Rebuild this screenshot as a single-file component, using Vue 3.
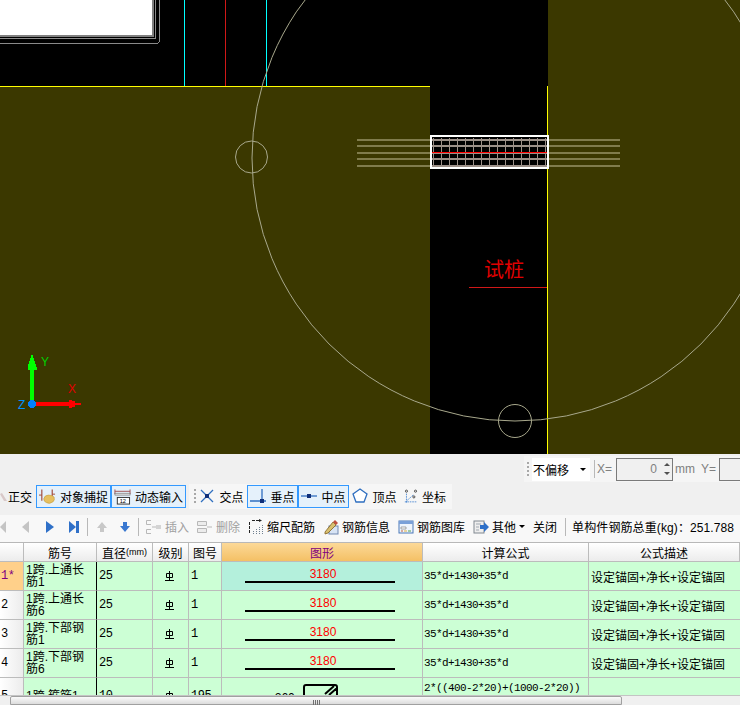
<template>
  <div class="page">
    <!-- CAD 画布 -->
    <svg class="canvas" width="740" height="454" viewBox="0 0 740 454" shape-rendering="crispEdges">
      <rect width="740" height="454" fill="#000" />
      <rect x="0" y="87" width="430" height="367" fill="#3b3800" />
      <rect x="548" y="0" width="192" height="454" fill="#3b3800" />
      <rect x="0" y="86" width="430" height="1" fill="#ffff00" />
      <rect x="547" y="86" width="1" height="368" fill="#ffff00" />
      <rect x="184" y="0" width="1" height="86" fill="#00ffff" />
      <rect x="225" y="0" width="1" height="86" fill="#d01818" />
      <rect x="266" y="0" width="1" height="86" fill="#00ffff" />

      <rect x="0" y="0" width="152" height="35" fill="#fff" />
      <path d="M0 36H153V0" fill="none" stroke="#808080" stroke-width="2" />
      <path d="M0 38.5H155.5V0" fill="none" stroke="#8a8a8a" />
      <path d="M0 43.5H156Q159.5 43.5 159.5 40V0" fill="none" stroke="#8a8a8a" />

      <g shape-rendering="auto" fill="none" stroke="#a8a88c" stroke-width="1">
        <circle cx="515" cy="158" r="263" />
        <circle cx="251.5" cy="157" r="16" />
        <circle cx="515" cy="421" r="16.5" />
      </g>

      <rect v-for="y in barYs" :key="'b' + y" x="357" :y="y" width="263" height="2" fill="#807c4c" />
      <rect x="430" y="136" width="118" height="33" fill="#000" />
      <rect v-for="y in barYs" :key="'g' + y" x="431" :y="y" width="116" height="2" fill="#9c9088" />
      <rect v-for="x in stirrupXs" :key="x" :x="x" y="138" width="1" height="30" fill="#9c9088" />
      <rect x="431" y="152" width="116" height="1" fill="#ff0000" />
      <rect x="431" y="136" width="117" height="32" fill="none" stroke="#fff" stroke-width="2" />

      <text x="484" y="277" class="pile-text">试桩</text>
      <rect x="469" y="287" width="78" height="1" fill="#d01818" />

      <!-- 坐标轴 -->
      <rect x="30" y="368" width="4" height="36" fill="#00ff00" />
      <path d="M31 355h2v3h1v3h1v3h1v3h0.500v3h-9v-3h0.500v-3h1v-3h1v-3h1z" fill="#00ff00" />
      <rect x="34" y="402" width="36" height="4" fill="#ff0000" />
      <path d="M69 400h3v1h3v2h6v2h-6v2h-3v1h-3z" fill="#ff0000" />
      <circle cx="32" cy="404" r="4" fill="#0080ff" />
      <text x="41" y="366" class="axis" fill="#00d000">Y</text>
      <text x="68" y="393" class="axis" fill="#e00000">X</text>
      <text x="18" y="409" class="axis" fill="#0090ff">Z</text>
    </svg>

    <div class="panel">
      <!-- 偏移工具条 -->
      <div class="offset-bar">
        <div class="offset-group">
          <span class="grip"></span>
          <div class="combo">不偏移<span class="combo-arrow"></span></div>
          <span class="vsep"></span>
          <span class="dim x-label">X=</span>
          <div class="spin">0<span class="spin-btns"><i class="up"></i><i class="down"></i></span></div>
          <span class="dim mm-label">mm</span>
          <span class="dim y-label">Y=</span>
          <div class="spin"></div>
        </div>
      </div>

      <!-- 捕捉工具条 -->
      <div class="snap-bar">
        <div class="snap-group left">
          <span class="snap-btn plain ortho">
            <svg width="8" height="14" viewBox="0 0 8 14"><path d="M0 5l2-1 5 8H4z" fill="#d8c8c8" /></svg>
            正交
          </span>
          <span class="snap-btn on wide">
            <svg width="18" height="17" viewBox="0 0 18 17"><path d="M3 1v12M14 1v7" stroke="#a04838" stroke-width="1.200" /><path d="M0 7h3M14 6h3" stroke="#a04838" /><path d="M5 11q1-4 5-4t6 2q1 3-1 5-4 3-7 1-3-1-3-4z" fill="#e6c060" stroke="#c09838" stroke-width="0.600" /></svg>
            对象捕捉
          </span>
          <span class="snap-btn on wide">
            <svg width="18" height="17" viewBox="0 0 18 17"><path d="M1 1v5M17 1v5M1 3h16" stroke="#a05050" fill="none" /><rect x="1" y="5" width="16" height="2" fill="#e8e8e8" stroke="#606060" stroke-width="0.600" /><rect x="3.500" y="9.500" width="13" height="7" fill="#fff" stroke="#303030" /><text x="6" y="15.500" font-size="6" font-family="Liberation Sans">12</text></svg>
            动态输入
          </span>
        </div>
        <div class="snap-group right">
          <span class="grip"></span>
          <span class="snap-btn plain">
            <svg width="16" height="16" viewBox="0 0 16 16"><path d="M2 2l12 12M14 2L2 14" stroke="#2f6fc0" stroke-width="1.300" /><rect x="6" y="6" width="4" height="4" fill="#10307a" /></svg>
            交点
          </span>
          <span class="snap-btn on">
            <svg width="16" height="16" viewBox="0 0 16 16"><path d="M0 13h16M12 1v13" stroke="#2f6fc0" stroke-width="1.300" /><rect x="10" y="11" width="4" height="4" fill="#10307a" /></svg>
            垂点
          </span>
          <span class="snap-btn on">
            <svg width="16" height="16" viewBox="0 0 16 16"><path d="M0 8h16" stroke="#2f6fc0" stroke-width="1.300" /><rect x="6" y="6" width="4" height="4" fill="#10307a" /></svg>
            中点
          </span>
          <span class="snap-btn plain">
            <svg width="16" height="16" viewBox="0 0 16 16"><path d="M8 1l7 5-3 8H4L1 6z" fill="#fff" stroke="#2f6fc0" stroke-width="1.300" /></svg>
            顶点
          </span>
          <span class="snap-btn plain coord">
            <svg width="17" height="17" viewBox="0 0 17 17"><path d="M3 16V4M1 15h14M3 14l9-8" stroke="#3f80d0" stroke-dasharray="2 1" fill="none" /><circle cx="3" cy="2" r="1.300" fill="none" stroke="#333" /><circle cx="14" cy="2" r="1.300" fill="none" stroke="#333" /><circle cx="12" cy="9" r="1.300" fill="none" stroke="#333" /></svg>
            坐标
          </span>
        </div>
      </div>

      <!-- 钢筋工具条 -->
      <div class="rebar-bar">
        <svg class="nav first" width="6" height="12" viewBox="0 0 6 12"><path d="M6 0v12L0 6z" fill="#c4c4c4" /></svg>
        <svg class="nav prev" width="7" height="12" viewBox="0 0 7 12"><path d="M7 0v12L0 6z" fill="#c4c4c4" /></svg>
        <svg class="nav play" width="8" height="12" viewBox="0 0 8 12"><path d="M0 0v12l8-6z" fill="#2f70c8" /></svg>
        <svg class="nav last" width="10" height="12" viewBox="0 0 10 12"><path d="M0 0v12l7-6z" fill="#2f70c8" /><rect x="7" y="0" width="3" height="12" fill="#2f70c8" /></svg>
        <span class="vsep tool"></span>
        <svg class="nav up" width="10" height="12" viewBox="0 0 10 12"><path d="M5 1l5 6H7v4H3V7H0z" fill="#c8c8c8" /></svg>
        <svg class="nav down" width="10" height="12" viewBox="0 0 10 12"><path d="M5 11l5-6H7V1H3v4H0z" fill="#3a78d0" /></svg>
        <span class="vsep tool"></span>
        <span class="tool-btn disabled insert">
          <svg width="17" height="16" viewBox="0 0 17 16"><path d="M6 1.500H1.500v4H6M6 10.500H1.500v4H6M7 8h5" fill="none" stroke="#b8b8b8" /><rect x="11" y="6" width="5" height="4" fill="#d4d4d4" /></svg>
          插入
        </span>
        <span class="tool-btn disabled">
          <svg width="17" height="16" viewBox="0 0 17 16"><path d="M1.500 2.500h9v4h-9zM1.500 9.500h9v4h-9zM11 8h5" fill="#ececec" stroke="#b8b8b8" /></svg>
          删除
        </span>
        <span class="tool-btn">
          <svg width="16" height="16" viewBox="0 0 16 16"><path d="M1.500 3v12M4 1.500h7" stroke="#222" stroke-dasharray="3 1" fill="none" /><path d="M11 0v3l3-1.500z" fill="#222" /><path d="M5.500 15v-3M8.500 15v-5M11.500 15v-7M14.500 15v-9" stroke="#708090" stroke-dasharray="1 1" /></svg>
          缩尺配筋
        </span>
        <span class="tool-btn">
          <svg width="16" height="16" viewBox="0 0 16 16"><rect x="6" y="7" width="9" height="8" fill="#d8e4f4" stroke="#7088b0" /><path d="M2 13L10 3l3 3-8 8-3 1z" fill="#d8c070" stroke="#806020" stroke-width="0.800" /><path d="M10 3l2-2 3 3-2 2z" fill="#c05040" /></svg>
          钢筋信息
        </span>
        <span class="tool-btn">
          <svg width="16" height="16" viewBox="0 0 16 16"><rect x="1" y="2" width="14" height="12" fill="#eef4fc" stroke="#4a78b8" /><rect x="1" y="2" width="14" height="3" fill="#7aa0d8" /><path d="M3 8h5v2H3z" fill="#fff" stroke="#707070" stroke-width="0.600" /><path d="M3 12h2" stroke="#c06040" /><path d="M6 12h3" stroke="#e0b040" /><path d="M10 12h3" stroke="#50a050" /></svg>
          钢筋图库
        </span>
        <span class="tool-btn">
          <svg width="16" height="16" viewBox="0 0 16 16"><rect x="1" y="2" width="10" height="12" fill="#eeeeee" stroke="#808890" /><path d="M3 5h5M3 8h3M3 11h3" stroke="#a0a8b0" /><path d="M7 6h4V3l5 5-5 5v-3H7z" fill="#2f70c8" /></svg>
          其他<span class="caret"></span>
        </span>
        <span class="tool-btn close">关闭</span>
        <span class="vsep tool"></span>
        <span class="total">单构件钢筋总重(kg)：251.788</span>
      </div>
    </div>

    <!-- 钢筋表 -->
    <div class="sheet">
      <div class="grid">
        <div class="cell head"></div>
        <div v-for="h in headers" :key="h.label" class="cell head" :class="{ active: h.label === '图形' }">
          {{ h.label }}<span v-if="h.unit" class="unit">{{ h.unit }}</span>
        </div>
        <template v-for="(row, i) in rows" :key="row.id">
          <div class="cell num" :class="{ current: i === 0, tall: !row.len }">{{ row.id }}{{ i === 0 ? '*' : '' }}</div>
          <div class="cell name">{{ row.name }}</div>
          <div class="cell">{{ row.dia }}</div>
          <div class="cell center">
            <svg width="9" height="10" viewBox="0 0 9 10"><path d="M1.500 2.500h6v4h-6zM4.500 0v9M0 9.500h9" fill="none" stroke="#000" /></svg>
          </div>
          <div class="cell">{{ row.fig }}</div>
          <div class="cell shape" :class="{ picked: i === 0 }">
            <template v-if="row.len">
              <span class="len">{{ row.len }}</span>
              <span class="bar"></span>
            </template>
            <div v-else class="stirrup">
              <span>260</span>
              <svg width="36" height="24" viewBox="0 0 36 24"><path d="M1 24V3q0-2 2-2h29q2 0 2 2v22M22 10l9-8M26 11l8-7" fill="none" stroke="#000" stroke-width="2" /></svg>
            </div>
          </div>
          <div class="cell formula" :class="{ top: !row.len }">{{ row.formula }}</div>
          <div class="cell desc">{{ row.desc }}</div>
        </template>
      </div>
    </div>

    <!-- 横向滚动条 -->
    <div class="hscroll">
      <span class="thumb"><i></i></span>
    </div>
  </div>
</template>

<script setup>
const barYs = [139, 145, 152, 158, 165]
const stirrupXs = Array.from({ length: 15 }, (_, i) => Math.round(433 + i * 8.02))

const headers = [
  { label: '筋号' },
  { label: '直径', unit: '(mm)' },
  { label: '级别' },
  { label: '图号' },
  { label: '图形' },
  { label: '计算公式' },
  { label: '公式描述' },
]

const desc = '设定锚固+净长+设定锚固'
const formula = '35*d+1430+35*d'
const rows = [
  { id: 1, name: '1跨.上通长筋1', dia: 25, fig: 1, len: 3180, formula, desc },
  { id: 2, name: '1跨.上通长筋6', dia: 25, fig: 1, len: 3180, formula, desc },
  { id: 3, name: '1跨.下部钢筋1', dia: 25, fig: 1, len: 3180, formula, desc },
  { id: 4, name: '1跨.下部钢筋6', dia: 25, fig: 1, len: 3180, formula, desc },
  { id: 5, name: '1跨.箍筋1', dia: 10, fig: 195, len: 0, formula: '2*((400-2*20)+(1000-2*20))', desc: '' },
]
</script>

<style>
html,
body {
  margin: 0;
  background: #f0f0f0;
}
</style>

<style scoped>
.page {
  width: 740px;
  height: 705px;
  overflow: hidden;
  display: flex;
  flex-direction: column;
  background: #f0f0f0;
  color: #000;
  font-family: "Liberation Sans", "Noto Sans CJK SC", sans-serif;
  font-size: 12px;
}

.canvas {
  display: block;
  flex: none;
}

.pile-text {
  font-family: "Noto Sans CJK SC", sans-serif;
  font-size: 20px;
  fill: #e00000;
}

.axis {
  font-family: "Liberation Sans", sans-serif;
  font-size: 12px;
}

.panel {
  flex: none;
  height: 88px;
  display: flex;
  flex-direction: column;
}

.offset-bar {
  height: 28px;
  padding: 2px 0 0 524px;
  box-sizing: border-box;
  white-space: nowrap;
}

.offset-group {
  height: 26px;
  padding-left: 3px;
  display: flex;
  align-items: center;
  background: #f5f5f5;
}

.grip {
  width: 2px;
  height: 14px;
  flex: none;
  background: repeating-linear-gradient(#a8a8a8 0 2px, transparent 2px 4px);
}

.combo {
  width: 58px;
  height: 23px;
  flex: none;
  margin-left: 3px;
  padding-left: 1px;
  box-sizing: border-box;
  background: #fff;
  display: flex;
  align-items: center;
  font-size: 12px;
}

.combo-arrow {
  margin-left: auto;
  margin-right: 4px;
  border: 3px solid transparent;
  border-top: 3px solid #000;
  border-bottom: 0;
}

.vsep {
  width: 1px;
  height: 18px;
  margin: 0 2px 0 4px;
  background: #b8b8b8;
  flex: none;
}

.dim {
  color: #808080;
  font-size: 12px;
  flex: none;
}

.x-label {
  margin-right: 4px;
}

.mm-label {
  margin-left: 2px;
}

.y-label {
  margin: 0 3px 0 6px;
}

.spin {
  width: 57px;
  height: 23px;
  flex: none;
  box-sizing: border-box;
  border: 1px solid #7a7a7a;
  background: #f0f0f0;
  color: #808080;
  display: flex;
  align-items: center;
  justify-content: flex-end;
  gap: 6px;
  padding-right: 1px;
}

.spin-btns {
  width: 8px;
  display: flex;
  flex-direction: column;
  gap: 6px;
  align-items: center;
}

.spin-btns i {
  border: 3px solid transparent;
  border-top: 0;
}

.spin-btns .up {
  border-bottom: 3px solid #505050;
}

.spin-btns .down {
  border-bottom: 0;
  border-top: 3px solid #505050;
}

.snap-bar {
  height: 28px;
  display: flex;
  align-items: center;
  white-space: nowrap;
}

.snap-group {
  display: flex;
  align-items: center;
  height: 25px;
}

.snap-group.left {
  width: 189px;
}

.snap-group.right {
  width: 263px;
  background: #f6f6f6;
  padding-left: 5px;
  box-sizing: border-box;
}

.snap-btn {
  height: 23px;
  box-sizing: border-box;
  display: flex;
  align-items: center;
  gap: 4px;
  width: 51px;
  padding: 0 2px;
  justify-content: center;
  border: 1px solid transparent;
}

.snap-btn.on {
  border: 1px solid #3399ff;
  background: #e5f1fb;
}

.snap-btn.wide {
  width: 75px;
}

.snap-btn.ortho {
  width: 36px;
  padding: 0;
  gap: 0;
  border: 0;
  justify-content: flex-start;
}

.snap-btn.coord {
  margin-left: 1px;
  width: 48px;
  gap: 4px;
}

.rebar-bar {
  height: 32px;
  padding: 1px 0 0;
  box-sizing: border-box;
  display: flex;
  align-items: center;
  white-space: nowrap;
  background: linear-gradient(#f0f0f0 0 5px, #f8f8f8 5px);
}

.nav {
  flex: none;
}

.nav.prev {
  margin-left: 16px;
}

.nav.play {
  margin-left: 17px;
}

.nav.last {
  margin-left: 15px;
}

.nav.up {
  margin-left: 3px;
}

.nav.down {
  margin-left: 13px;
}

.vsep.tool {
  margin: 0 6px 0 8px;
}

.tool-btn {
  display: flex;
  align-items: center;
  gap: 3px;
  margin-right: 8px;
}

.tool-btn.insert {
  margin-right: 7px;
}

.tool-btn.disabled {
  color: #a0a0a0;
}

.tool-btn.close {
  margin-right: 0;
}

.caret {
  border: 3px solid transparent;
  border-top: 3px solid #000;
  border-bottom: 0;
}

.total {
  letter-spacing: 0.100px;
}

.sheet {
  flex: 1;
  min-height: 0;
  overflow: hidden;
  border-top: 1px solid #b8b8b8;
}

.grid {
  display: grid;
  grid-template-columns: 24px 73px 56px 36px 33px 201px 166px 151px;
  grid-template-rows: 19px;
  grid-auto-rows: minmax(29px, auto);
}

.cell {
  box-sizing: border-box;
  border-right: 1px solid #bcbcbc;
  border-bottom: 1px solid #bcbcbc;
  background: #ccffd5;
  padding: 0 2px;
  display: flex;
  align-items: center;
  overflow: hidden;
  font-family: "Liberation Mono", "Noto Sans CJK SC", monospace;
  font-size: 12px;
  letter-spacing: -0.5px;
}

.cell.tall {
  min-height: 37px;
}

.cell.head {
  background: linear-gradient(#ffffff, #ececec);
  justify-content: center;
  font-family: "Liberation Sans", "Noto Sans CJK SC", sans-serif;
  letter-spacing: 0;
  white-space: nowrap;
}

.cell.head.active {
  background: linear-gradient(#fcd998, #f4c065);
  color: #800080;
}

.unit {
  font-size: 9px;
}

.cell.num {
  background: linear-gradient(90deg, #ffffff, #ececec);
  padding: 0 1px;
}

.cell.num.current {
  background: #ffd08a;
  color: #800080;
}

.cell.name {
  border-right: 1px solid #000;
  font-family: "Liberation Sans", "Noto Sans CJK SC", sans-serif;
  line-height: 12px;
  letter-spacing: 0;
  padding: 0 1px 0 2px;
}

.cell.center {
  justify-content: center;
  padding-right: 5px;
}

.cell.shape {
  flex-direction: column;
  justify-content: flex-start;
  padding-top: 5px;
}

.cell.shape.picked {
  background: #b4f0dc;
}

.len {
  color: #ff0000;
  font-family: "Liberation Sans", sans-serif;
  font-size: 12px;
  letter-spacing: 0;
  line-height: 14px;
  margin-left: 2px;
}

.bar {
  width: 150px;
  height: 2px;
  background: #000;
  margin-left: -4px;
}

.stirrup {
  display: flex;
  align-items: flex-start;
  gap: 8px;
  margin-left: -31px;
  margin-top: 1px;
}

.stirrup span {
  margin-top: 8px;
}

.cell.formula {
  font-size: 11px;
  letter-spacing: -0.600px;
  white-space: nowrap;
  padding-left: 1px;
}

.cell.formula.top {
  align-items: flex-start;
  padding-top: 4px;
}

.cell.desc {
  font-family: "Liberation Sans", "Noto Sans CJK SC", sans-serif;
  letter-spacing: 0;
  border-right: 0;
}

.hscroll {
  flex: none;
  height: 10px;
  padding-left: 10px;
  background: #f0f0f0;
  border-top: 1px solid #c4c4c4;
  box-sizing: border-box;
}

.thumb {
  display: flex;
  justify-content: center;
  width: 612px;
  height: 100%;
  box-sizing: border-box;
  border: 1px solid #a0a0a0;
  border-radius: 2px 2px 0 0;
  background: linear-gradient(#fafafa, #dcdcdc);
}

.thumb i {
  width: 7px;
  height: 5px;
  margin-top: 3px;
  background: repeating-linear-gradient(90deg, #707070 0 1px, transparent 1px 2px);
}
</style>
